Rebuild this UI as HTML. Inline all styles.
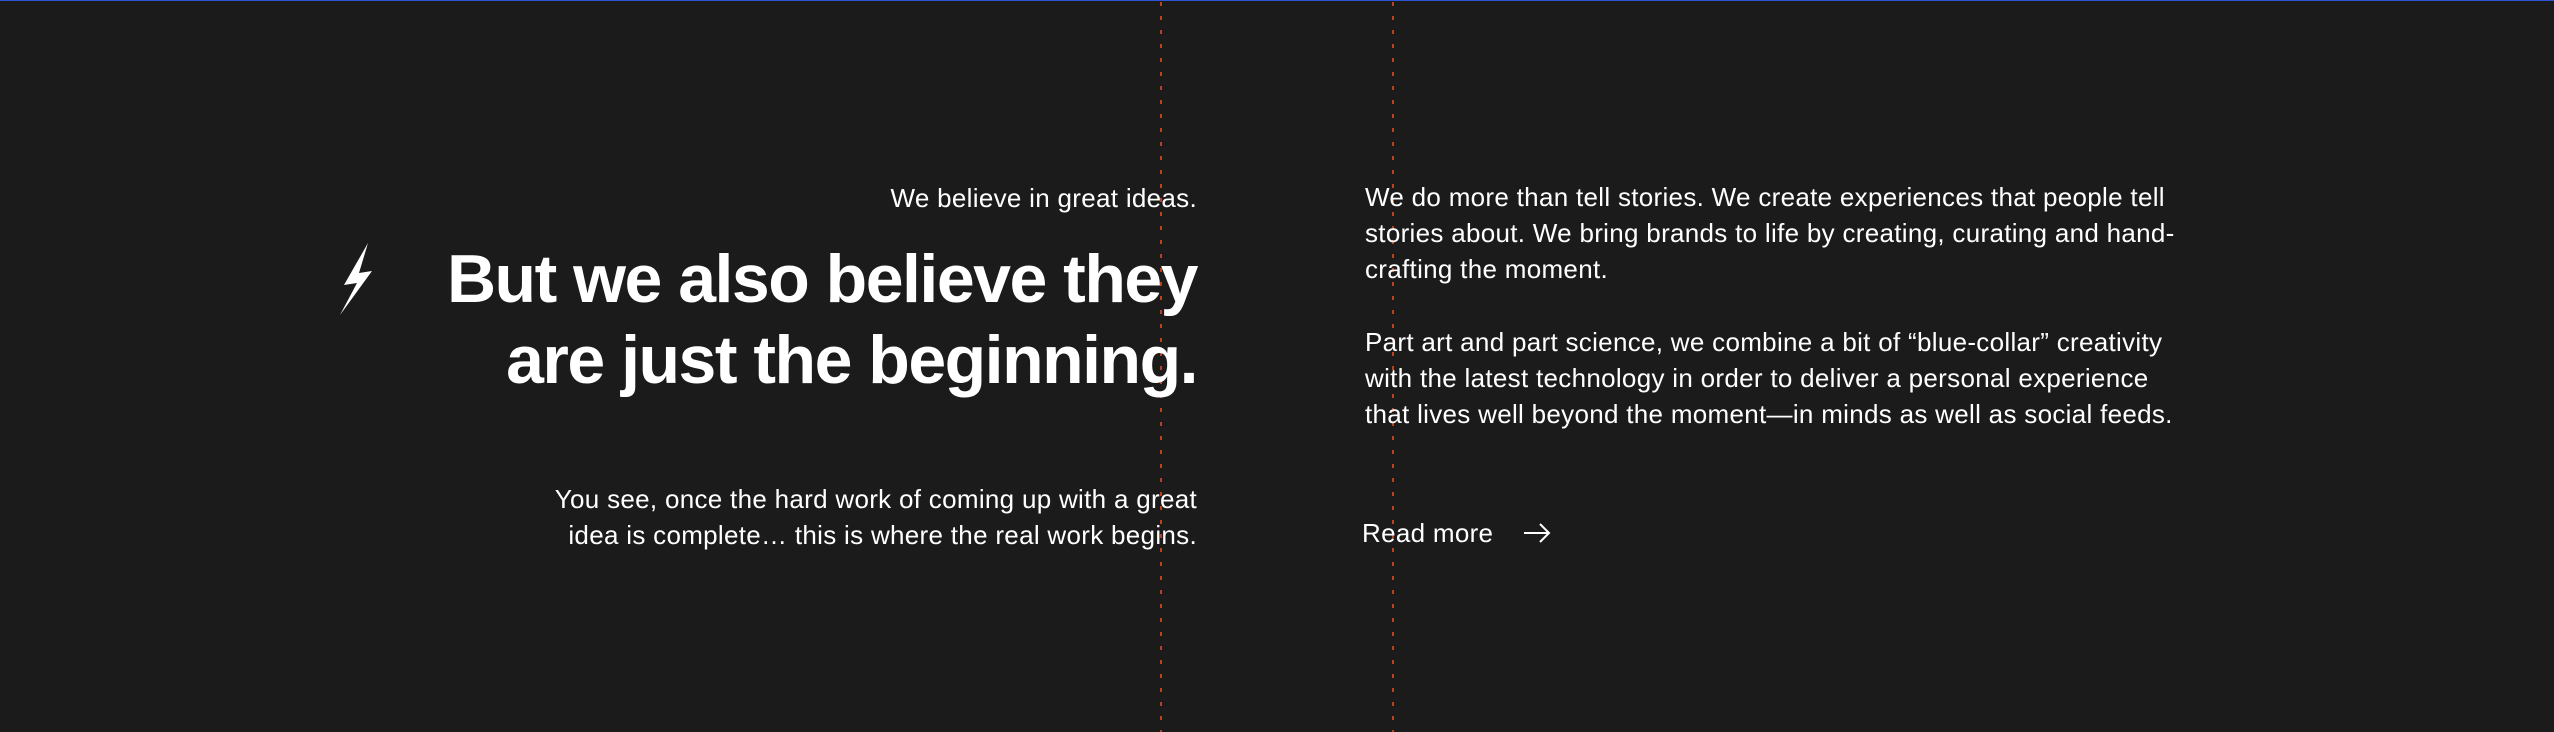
<!DOCTYPE html>
<html><head><style>
html,body{margin:0;padding:0;}
body{width:2554px;height:730px;background:#1b1b1b;position:relative;overflow:hidden;font-family:"Liberation Sans",sans-serif;color:#fff;}
.top{position:absolute;left:0;top:0;width:2554px;height:1px;background:#2f55d4;}
.vl{position:absolute;top:2px;width:2px;height:730px;background:repeating-linear-gradient(to bottom,#b5441a 0 4px,transparent 4px 14px);}
.t{position:absolute;white-space:nowrap;font-size:26px;letter-spacing:0.3px;line-height:36px;}
.r{text-align:right;}
.h{position:absolute;white-space:nowrap;font-size:68px;letter-spacing:-1.5px;line-height:81px;text-align:right;right:1357px;top:239px;font-weight:bold;}
</style></head><body>
<div class="top"></div>
<div class="vl" style="left:1160px"></div>
<div class="vl" style="left:1392px"></div>
<div class="t r" style="right:1357px;top:180px;">We believe in great ideas.</div>
<svg style="position:absolute;left:338px;top:243px" width="38" height="72" viewBox="0 0 38 72"><path d="M30 0 L6 42 L19 40 L2 72 L34 28 L21 30 Z" fill="#fff"/></svg>
<div class="h">But we also believe they<br>are just the beginning.</div>
<div class="t r" style="right:1357px;top:481px;">You see, once the hard work of coming up with a great<br>idea is complete… this is where the real work begins.</div>
<div class="t" style="left:1365px;top:179px;">We do more than tell stories. We create experiences that people tell<br>stories about. We bring brands to life by creating, curating and hand-<br>crafting the moment.</div>
<div class="t" style="left:1365px;top:324px;">Part art and part science, we combine a bit of “blue-collar” creativity<br>with the latest technology in order to deliver a personal experience<br>that lives well beyond the moment—in minds as well as social feeds.</div>
<div class="t" style="left:1362px;top:515px;">Read more</div>
<svg style="position:absolute;left:1523px;top:522px" width="28" height="22" viewBox="0 0 28 22"><path d="M1 11 H26 M17 2 L26 11 L17 20" stroke="#fff" stroke-width="2" fill="none"/></svg>
</body></html>
